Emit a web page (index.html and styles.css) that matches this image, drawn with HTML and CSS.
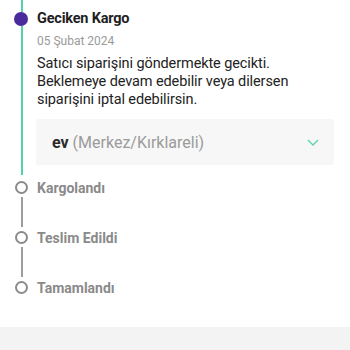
FILE: index.html
```html
<!DOCTYPE html>
<html lang="tr">
<head>
<meta charset="utf-8">
<link rel="stylesheet" href="styles.css">
</head>
<body>
<div class="timeline">
  <div class="step active">
    <div class="ind">
      <div class="line-top"></div>
      <div class="dot"></div>
      <div class="line-fill"></div>
    </div>
    <div class="content">
      <div class="title">Geciken Kargo</div>
      <div class="date">05 Şubat 2024</div>
      <p class="desc">Satıcı siparişini göndermekte gecikti. Beklemeye devam edebilir veya dilersen siparişini iptal edebilirsin.</p>
      <div class="card">
        <span class="addr"><b>ev</b> (Merkez/Kırklareli)</span>
        <svg class="chev" width="12" height="7" viewBox="0 0 12 7"><polyline points="1,1 6,6 11,1" fill="none" stroke="#5cd2ad" stroke-width="1.3"/></svg>
      </div>
    </div>
  </div>
  <div class="step idle">
    <div class="ind"><div class="circle"></div></div>
    <div class="label">Kargolandı</div>
  </div>
  <div class="conn"></div>
  <div class="step idle">
    <div class="ind"><div class="circle"></div></div>
    <div class="label">Teslim Edildi</div>
  </div>
  <div class="conn"></div>
  <div class="step idle">
    <div class="ind"><div class="circle"></div></div>
    <div class="label">Tamamlandı</div>
  </div>
</div>
<div class="band"></div>
</body>
</html>
```
FILE: styles.css
```css
html, body {
  margin: 0;
  padding: 0;
  background: #ffffff;
  font-family: Roboto, "Noto Sans", sans-serif;
  width: 350px;
  height: 350px;
  overflow: hidden;
}

.timeline {
  display: flex;
  flex-direction: column;
}

.step {
  display: grid;
  grid-template-columns: 37px 1fr;
}

.ind {
  display: flex;
  flex-direction: column;
}

.line-top {
  flex-shrink: 0;
  width: 2px;
  height: 12px;
  margin-left: 21px;
  background: #4fd3a7;
}

.dot {
  flex-shrink: 0;
  width: 14px;
  height: 14px;
  border-radius: 50%;
  margin-left: 14px;
  background: #4a2b9c;
}

.line-fill {
  flex: 1;
  width: 2px;
  margin-left: 21px;
  background: #4fd3a7;
}

.content {
  padding-top: 7px;
  padding-bottom: 10px;
  padding-right: 16px;
}

.title {
  font-size: 14.5px;
  line-height: 24px;
  font-weight: 700;
  letter-spacing: -0.2px;
  color: #1f1f1f;
}

.date {
  margin-top: 1px;
  font-size: 12px;
  line-height: 18px;
  color: #9a9a9a;
}

.desc {
  margin: 5px 0 0;
  font-size: 14.5px;
  line-height: 18px;
  letter-spacing: -0.1px;
  color: #222222;
}

.card {
  margin-top: 10px;
  height: 46px;
  margin-left: -1px;
  background: #f7f7f7;
  display: flex;
  align-items: center;
  justify-content: space-between;
  padding: 0 15px 0 16px;
  border-radius: 2px;
}

.addr {
  font-size: 16px;
  color: #9b9b9b;
}

.addr b {
  color: #2a2a2a;
  font-weight: 700;
}

.step.idle {
  margin-top: 6px;
  align-items: center;
  height: 12px;
}

.conn + .step.idle {
  margin-top: 4px;
}

.step.idle .ind {
  justify-content: center;
}

.circle {
  flex-shrink: 0;
  box-sizing: border-box;
  width: 13px;
  height: 13px;
  margin-left: 15px;
  border: 2px solid #8a8a8a;
  border-radius: 50%;
}

.label {
  font-size: 14px;
  font-weight: 700;
  color: #8a8a8a;
  line-height: 12px;
}

.conn {
  width: 2px;
  height: 30px;
  margin-top: 4px;
  margin-left: 21px;
  background: #9d9d9d;
}

.band {
  margin-top: 34px;
  height: 23px;
  background: #f3f3f3;
}
```
